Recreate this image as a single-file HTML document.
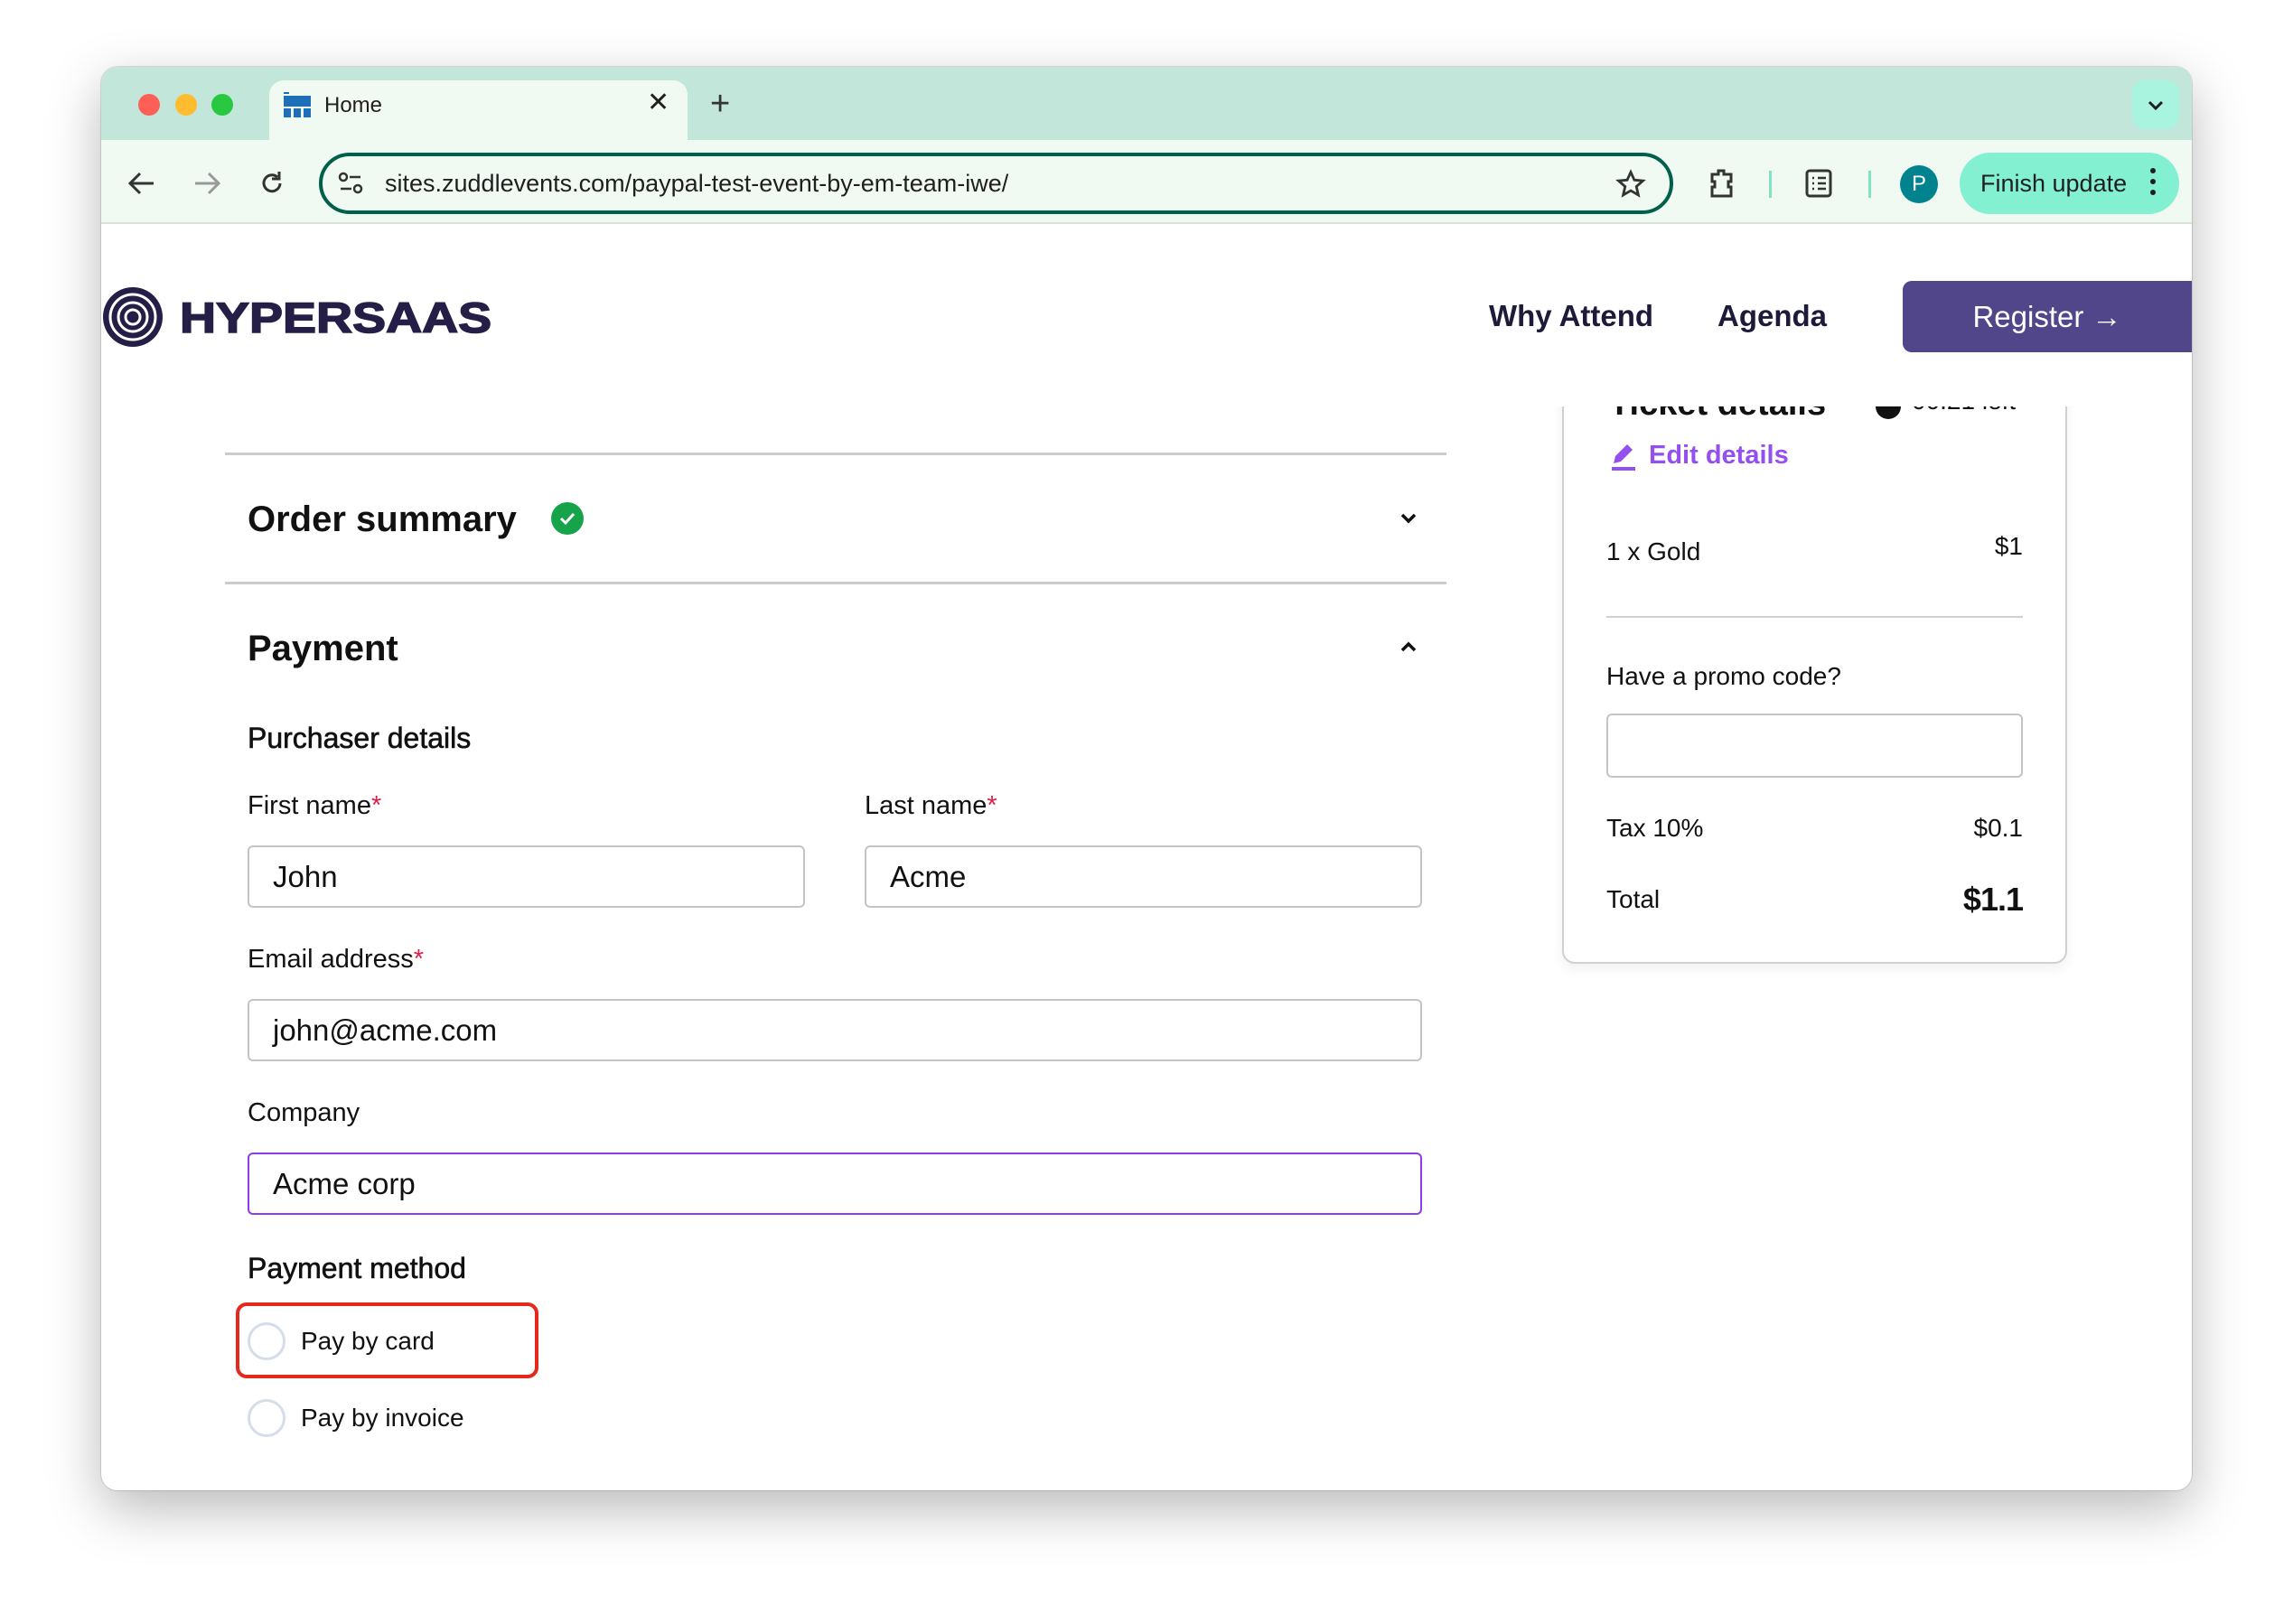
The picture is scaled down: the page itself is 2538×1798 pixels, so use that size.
<!DOCTYPE html>
<html><head><meta charset="utf-8">
<style>
*{box-sizing:border-box;margin:0;padding:0}
html,body{width:2538px;height:1798px;background:#fff;overflow:hidden;font-family:"Liberation Sans",Arial,sans-serif;color:#111}
.a{position:absolute}
#win{position:absolute;left:112px;top:74px;width:2314px;height:1576px;border-radius:18px;overflow:hidden;background:#fff;box-shadow:0 20px 60px rgba(0,0,0,.28),0 0 0 1px rgba(0,0,0,.12)}
.lbl{font-size:29px;color:#111}
.inp{position:absolute;border:2px solid #c4c4c8;border-radius:6px;background:#fff;font-size:33px;padding-left:26px;display:flex;align-items:center;color:#111}
.radio{position:absolute;width:42px;height:42px;border-radius:50%;border:3px solid #d5dde8;background:#fff}
</style></head><body>
<div id="win">
  <div class="a" style="left:0;top:0;width:2314px;height:81px;background:#c2e6da"></div>
  <div class="a" style="left:41px;top:30px;width:24px;height:24px;border-radius:50%;background:#fe5f57"></div>
  <div class="a" style="left:82px;top:30px;width:24px;height:24px;border-radius:50%;background:#febc2e"></div>
  <div class="a" style="left:122px;top:30px;width:24px;height:24px;border-radius:50%;background:#28c840"></div>
  <div class="a" style="left:186px;top:15px;width:463px;height:70px;background:#f0faf3;border-radius:16px 16px 0 0"></div>
  <svg class="a" style="left:202px;top:28px" width="30" height="28" viewBox="0 0 30 28"><rect x="0" y="0" width="6" height="2" fill="#1e6fb8"/><rect x="0" y="4" width="30" height="12" fill="#1e6fb8"/><rect x="0" y="18" width="8" height="10" fill="#1e6fb8"/><rect x="11" y="18" width="8" height="10" fill="#1e6fb8"/><rect x="22" y="18" width="8" height="10" fill="#1e6fb8"/></svg>
  <div class="a" style="left:247px;top:29px;font-size:24px;color:#1f1f1f">Home</div>
  <div class="a" style="left:604px;top:22px;font-size:30px;color:#1f1f1f">✕</div>
  <div class="a" style="left:674px;top:20px;font-size:38px;color:#333">+</div>
  <div class="a" style="left:2248px;top:15px;width:52px;height:54px;border-radius:14px;background:#a9f4df"></div>
  <svg class="a" style="left:2264px;top:36px" width="20" height="14" viewBox="0 0 20 14"><path d="M3 3l7 7 7-7" stroke="#1f1f1f" stroke-width="3" fill="none"/></svg>
  <div class="a" style="left:0;top:81px;width:2314px;height:93px;background:#f0faf3;border-bottom:2px solid #d4e4dc"></div>
  <svg class="a" style="left:28px;top:114px" width="34" height="30" viewBox="0 0 34 30"><path d="M30 15H5M15 4L4 15l11 11" stroke="#333" stroke-width="3" fill="none"/></svg>
  <svg class="a" style="left:100px;top:114px" width="34" height="30" viewBox="0 0 34 30"><path d="M4 15h25M19 4l11 11-11 11" stroke="#999" stroke-width="3" fill="none"/></svg>
  <svg class="a" style="left:173px;top:113px" width="32" height="32" viewBox="0 0 32 32"><path d="M25 16a9 9 0 1 1-3-7" stroke="#333" stroke-width="3" fill="none"/><path d="M24 3v8h-8" stroke="#333" stroke-width="3" fill="none"/></svg>
  <div class="a" style="left:241px;top:95px;width:1499px;height:68px;border:4px solid #00604a;border-radius:34px"></div>
  <svg class="a" style="left:262px;top:115px" width="28" height="28" viewBox="0 0 28 28"><circle cx="6" cy="7" r="4" stroke="#333" stroke-width="2.5" fill="none"/><path d="M13 7h12M3 20h12" stroke="#333" stroke-width="2.5"/><circle cx="22" cy="20" r="4" stroke="#333" stroke-width="2.5" fill="none"/></svg>
  <div class="a" style="left:314px;top:114px;font-size:27px;color:#1f1f1f">sites.zuddlevents.com/paypal-test-event-by-em-team-iwe/</div>
  <svg class="a" style="left:1676px;top:113px" width="34" height="34" viewBox="0 0 24 24"><path d="M12 2.5l2.8 6.2 6.7.6-5.1 4.5 1.5 6.6L12 17l-5.9 3.4 1.5-6.6-5.1-4.5 6.7-.6z" stroke="#333" stroke-width="2" fill="none"/></svg>
  <svg class="a" style="left:1778px;top:111px" width="32" height="36" viewBox="0 0 32 36"><path d="M5 8h7V4h6v4h8v8h-3v6h3v10H5V22h3v-6H5z" stroke="#333" stroke-width="3" fill="none"/></svg>
  <div class="a" style="left:1846px;top:115px;width:3px;height:30px;background:#7fe3c6"></div>
  <svg class="a" style="left:1886px;top:113px" width="30" height="32" viewBox="0 0 30 32"><rect x="2" y="2" width="26" height="28" rx="3" stroke="#333" stroke-width="3" fill="none"/><path d="M8 10h2M14 10h9M8 16h2M14 16h9M8 22h2M14 22h9" stroke="#333" stroke-width="2.5"/></svg>
  <div class="a" style="left:1956px;top:115px;width:3px;height:30px;background:#7fe3c6"></div>
  <div class="a" style="left:1991px;top:109px;width:42px;height:42px;border-radius:50%;background:#00838f;color:#fff;font-size:24px;text-align:center;line-height:42px">P</div>
  <div class="a" style="left:2057px;top:95px;width:243px;height:68px;border-radius:34px;background:#83f0d2"></div>
  <div class="a" style="left:2080px;top:114px;font-size:27px;color:#1f1f1f">Finish update</div>
  <div class="a" style="left:2268px;top:112px;width:6px;height:6px;border-radius:50%;background:#1f1f1f;box-shadow:0 12px 0 #1f1f1f,0 24px 0 #1f1f1f"></div>

  <div class="a" style="left:137px;top:427px;width:1352px;height:3px;background:#ccccd0"></div>
  <div class="a" style="left:162px;top:479px;font-size:40px;font-weight:bold">Order summary</div>
  <svg class="a" style="left:498px;top:482px" width="36" height="36" viewBox="0 0 36 36"><circle cx="18" cy="18" r="18" fill="#16a34a"/><path d="M11 18l5 5 9-10" stroke="#fff" stroke-width="3" fill="none"/></svg>
  <svg class="a" style="left:1437px;top:493px" width="20" height="14" viewBox="0 0 20 14"><path d="M3 3l7 7 7-7" stroke="#111" stroke-width="3.5" fill="none"/></svg>
  <div class="a" style="left:137px;top:570px;width:1352px;height:3px;background:#ccccd0"></div>
  <div class="a" style="left:162px;top:622px;font-size:40px;font-weight:bold">Payment</div>
  <svg class="a" style="left:1437px;top:635px" width="20" height="14" viewBox="0 0 20 14"><path d="M3 11l7-7 7 7" stroke="#111" stroke-width="3.5" fill="none"/></svg>
  <div class="a" style="left:162px;top:725px;font-size:32px;-webkit-text-stroke:0.6px #111">Purchaser details</div>
  <div class="a lbl" style="left:162px;top:802px">First name<span style="color:#e11d48">*</span></div>
  <div class="a lbl" style="left:845px;top:802px">Last name<span style="color:#e11d48">*</span></div>
  <div class="inp" style="left:162px;top:862px;width:617px;height:69px">John</div>
  <div class="inp" style="left:845px;top:862px;width:617px;height:69px">Acme</div>
  <div class="a lbl" style="left:162px;top:972px">Email address<span style="color:#e11d48">*</span></div>
  <div class="inp" style="left:162px;top:1032px;width:1300px;height:69px">john@acme.com</div>
  <div class="a lbl" style="left:162px;top:1142px">Company</div>
  <div class="inp" style="left:162px;top:1202px;width:1300px;height:69px;border-color:#8b3cf0">Acme corp</div>
  <div class="a" style="left:162px;top:1312px;font-size:32px;-webkit-text-stroke:0.6px #111">Payment method</div>
  <div class="a" style="left:149px;top:1368px;width:335px;height:84px;border:4px solid #e5271c;border-radius:12px"></div>
  <div class="radio" style="left:162px;top:1390px"></div>
  <div class="a lbl" style="left:221px;top:1395px;font-size:28px">Pay by card</div>
  <div class="radio" style="left:162px;top:1475px"></div>
  <div class="a lbl" style="left:221px;top:1480px;font-size:28px">Pay by invoice</div>

  <div class="a" style="left:1617px;top:340px;width:559px;height:653px;border:2px solid #cfcfd4;border-radius:0 0 14px 14px;box-shadow:0 6px 14px rgba(0,0,0,.06)"></div>
  <div class="a" style="left:1669px;top:352px;font-size:38px;font-weight:bold">Ticket details</div>
  <div class="a" style="left:1964px;top:362px;width:28px;height:28px;border-radius:50%;background:#111"></div>
  <div class="a" style="left:2004px;top:354px;font-size:28px">00:21 left</div>
  <svg class="a" style="left:1670px;top:413px" width="28" height="34" viewBox="0 0 28 34"><path d="M4 26l2-8L19 5l6 6-13 13z" fill="#9450ee"/><rect x="2" y="30" width="26" height="4" fill="#9450ee"/></svg>
  <div class="a" style="left:1713px;top:414px;font-size:29px;font-weight:bold;color:#9450ee">Edit details</div>
  <div class="a lbl" style="left:1666px;top:521px;font-size:28px">1 x Gold</div>
  <div class="a lbl" style="left:2060px;top:515px;width:67px;text-align:right;font-size:28px">$1</div>
  <div class="a" style="left:1666px;top:608px;width:461px;height:2px;background:#cfcfd4"></div>
  <div class="a lbl" style="left:1666px;top:659px;font-size:28px">Have a promo code?</div>
  <div class="inp" style="left:1666px;top:716px;width:461px;height:71px"></div>
  <div class="a lbl" style="left:1666px;top:827px;font-size:28px">Tax 10%</div>
  <div class="a lbl" style="left:2000px;top:827px;width:127px;text-align:right;font-size:28px">$0.1</div>
  <div class="a lbl" style="left:1666px;top:906px;font-size:28px">Total</div>
  <div class="a" style="left:2000px;top:901px;width:127px;text-align:right;font-size:36px;font-weight:bold;letter-spacing:-1px">$1.1</div>

  <div class="a" style="left:0;top:176px;width:2314px;height:200px;background:#fff"></div>
  <svg class="a" style="left:0;top:241px" width="72" height="72" viewBox="0 0 72 72"><circle cx="35" cy="36" r="33" fill="#251e47"/><circle cx="35" cy="36" r="25" fill="none" stroke="#fff" stroke-width="3"/><circle cx="35" cy="36" r="16" fill="none" stroke="#fff" stroke-width="3"/><circle cx="35" cy="36" r="8" fill="none" stroke="#fff" stroke-width="3"/></svg>
  <div class="a" style="left:87px;top:250px;font-size:47px;font-weight:900;color:#251e47;letter-spacing:0px;transform:scaleX(1.18);transform-origin:left;-webkit-text-stroke:1.5px #251e47">HYPERSAAS</div>
  <div class="a" style="left:1536px;top:257px;font-size:33px;font-weight:bold;color:#1e1b3a">Why Attend</div>
  <div class="a" style="left:1789px;top:257px;font-size:33px;font-weight:bold;color:#1e1b3a">Agenda</div>
  <div class="a" style="left:1994px;top:237px;width:320px;height:79px;background:#52468b;border-radius:10px 0 0 10px;color:#fff;font-size:33px;text-align:center;line-height:79px">Register →</div>
</div>
</body></html>
